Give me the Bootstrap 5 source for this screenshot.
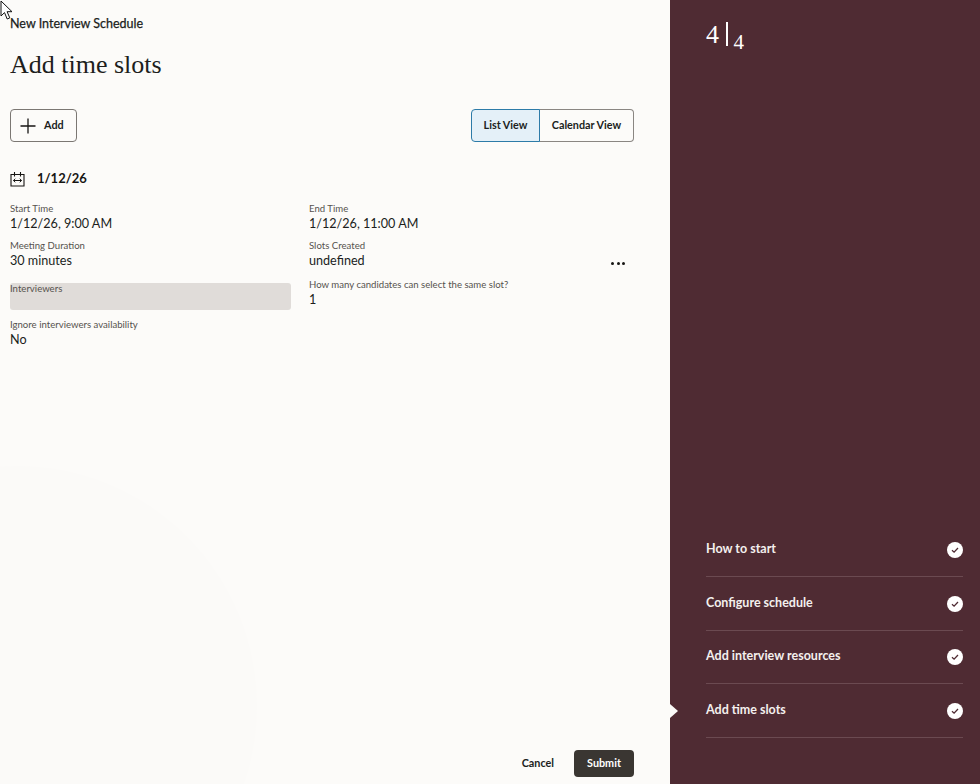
<!DOCTYPE html>
<html lang="en">
<head>
<meta charset="utf-8">
<title>Add time slots</title>
<link href="https://cdn.jsdelivr.net/npm/bootstrap@5.3.0/dist/css/bootstrap.min.css" rel="stylesheet">
<style>
html,body{height:784px;overflow:hidden}
body{font-family:Lato,"Noto Sans",sans-serif;background:#fcfbf9;color:#161513}
.shell{height:784px}
.mainpane{width:670px;padding:0 36px 7px 10px;position:relative;overflow:hidden;background:#fcfbf9}
.mainpane>*{position:relative}
.mainpane>.blob{position:absolute;left:-223px;top:466px;width:480px;height:480px;border-radius:50%;background:#fbfaf8}
.pointer{position:absolute;left:0;top:0;z-index:5}
.crumb{font-size:12.500px;line-height:16px;margin-top:16px;color:#201e1c;-webkit-text-stroke:.25px #201e1c}
.pagetitle{font-family:"Liberation Serif","DejaVu Serif",serif;font-size:26px;font-weight:400;line-height:32px;margin:17px 0 0;color:#201e1c}
.toolbar{margin-top:28px;height:33px}
.addbtn{height:33px;width:67px;padding:0 0 0 9px;gap:8px;font-size:10.800px;font-weight:700;background:transparent;border:1px solid #7b7773;border-radius:4px;color:#201e1c}
.viewgroup .btn{height:33px;font-size:10.800px;font-weight:700;padding:0 12px;color:#201e1c;background:transparent;border:1px solid #8a8682;border-radius:4px}
.viewgroup .btn.active{background:#e4f0f8;border-color:#2d7ba8;color:#201e1c;width:69px;padding:0}
.viewgroup .btn+.btn{margin-left:-1px;border-left-color:#2d7ba8;width:95px;padding:0}
.dayline{margin-top:26px;gap:12px;height:22px;font-size:13px;font-weight:700}
.fields{margin-top:12px;gap:18px}
.fieldcol{width:281px}
.fieldcol.wide{width:325px}
.fld{margin-bottom:7px;height:30px}
.lbl{font-size:9.600px;line-height:14px;color:#56524e;white-space:nowrap}
.val{font-size:12.600px;line-height:16px;color:#201e1c}
.graybox{height:27px;margin:14px 0 8px;background:#e0dcd9;border-radius:3px}
.graybox .lbl{line-height:11px}
.third{margin-top:9px}
.dots{gap:2.500px;margin:5px 9px 0 0}
.dots i{width:3px;height:3px;border-radius:50%;background:#161513;display:block}
.actions{gap:20px}
.cancelbtn{font-size:10.800px;font-weight:700;color:#201e1c;padding:0;border:0;background:transparent}
.submitbtn{font-size:10.800px;font-weight:700;height:27px;width:60px;padding:0;background:#3a3632;color:#fff;border:0;border-radius:4px}
.sidepane{width:310px;background:#4f2b33;color:#fff;padding:0 17px 46px 36px;position:relative}
.counter{font-family:"Liberation Serif",serif;padding-top:21px;height:60px;align-items:flex-start}
.counter .big{font-size:26px;line-height:28px;color:#fff}
.counter .bar{width:1.500px;height:24px;background:#fff;margin:1px 7px 0 7px;display:block}
.counter .small-n{font-size:21px;line-height:22px;margin-top:10px;margin-left:-1px}
.steps li{height:53.600px;border-bottom:1px solid #6b4a51;font-size:12.500px;font-weight:700;color:#f4f0ee}
.steps li span.stepname{margin-top:-1px}
.steps li:last-child{position:relative}
.caret{position:absolute;left:-36px;top:20px;width:0;height:0;border-style:solid;border-width:7px 0 7px 8px;border-color:transparent transparent transparent #fcfbf9}
</style>
</head>
<body>
<div class="d-flex shell">
  <main class="mainpane d-flex flex-column">
    <div class="blob"></div>
    <svg class="pointer" width="14" height="21" viewBox="0 0 14 21"><path d="M1 1v15l3.500-3.400 2.700 6.400 2.600-1.100-2.700-6.200H12z" fill="#fff" stroke="#111" stroke-width="1"/></svg>
    <div class="crumb">New Interview Schedule</div>
    <h1 class="pagetitle">Add time slots</h1>
    <div class="toolbar d-flex justify-content-between">
      <button type="button" class="btn addbtn d-flex align-items-center">
        <svg width="16" height="16" viewBox="0 0 16 16"><path d="M8 .5v15M.5 8h15" stroke="#161513" stroke-width="1.300" fill="none"/></svg>
        <span>Add</span>
      </button>
      <div class="btn-group viewgroup" role="group">
        <button type="button" class="btn active">List View</button>
        <button type="button" class="btn">Calendar View</button>
      </div>
    </div>
    <div class="dayline d-flex align-items-center">
      <svg width="15" height="15" viewBox="0 0 15 15" fill="none" stroke="#161513" stroke-width="1.100"><path d="M1 2.500h13v11.500H1zM4.500 0v4.500M10.500 0v4.500M3.500 8.500h8"/><path d="M5.200 6.700L3.500 8.500l1.700 1.800M9.800 6.700l1.700 1.800-1.700 1.800" stroke-width="1"/></svg>
      <span>1/12/26</span>
    </div>
    <div class="fields d-flex">
      <div class="fieldcol">
        <div class="fld"><div class="lbl">Start Time</div><div class="val">1/12/26, 9:00 AM</div></div>
        <div class="fld"><div class="lbl">Meeting Duration</div><div class="val">30 minutes</div></div>
        <div class="graybox"><div class="lbl">Interviewers</div></div>
        <div class="fld"><div class="lbl">Ignore interviewers availability</div><div class="val">No</div></div>
      </div>
      <div class="fieldcol wide">
        <div class="fld"><div class="lbl">End Time</div><div class="val">1/12/26, 11:00 AM</div></div>
        <div class="fld"><div class="lbl">Slots Created</div>
          <div class="d-flex justify-content-between align-items-center"><div class="val">undefined</div><div class="dots d-flex"><i></i><i></i><i></i></div></div>
        </div>
        <div class="fld third"><div class="lbl">How many candidates can select the same slot?</div><div class="val">1</div></div>
      </div>
    </div>
    <div class="actions d-flex justify-content-end align-items-center mt-auto">
      <button type="button" class="btn cancelbtn">Cancel</button>
      <button type="button" class="btn submitbtn">Submit</button>
    </div>
  </main>
  <aside class="sidepane d-flex flex-column">
    <div class="counter d-flex"><span class="big">4</span><span class="bar"></span><span class="small-n">4</span></div>
    <ul class="steps list-unstyled m-0 mt-auto">
      <li class="d-flex justify-content-between align-items-center"><span class="stepname">How to start</span><svg width="16" height="16" viewBox="0 0 16 16"><circle cx="8" cy="8" r="8" fill="#fff"/><path d="M5 8.200l2.100 2L11 6" stroke="#4f2b33" stroke-width="1.300" fill="none"/></svg></li>
      <li class="d-flex justify-content-between align-items-center"><span class="stepname">Configure schedule</span><svg width="16" height="16" viewBox="0 0 16 16"><circle cx="8" cy="8" r="8" fill="#fff"/><path d="M5 8.200l2.100 2L11 6" stroke="#4f2b33" stroke-width="1.300" fill="none"/></svg></li>
      <li class="d-flex justify-content-between align-items-center"><span class="stepname">Add interview resources</span><svg width="16" height="16" viewBox="0 0 16 16"><circle cx="8" cy="8" r="8" fill="#fff"/><path d="M5 8.200l2.100 2L11 6" stroke="#4f2b33" stroke-width="1.300" fill="none"/></svg></li>
      <li class="d-flex justify-content-between align-items-center"><span class="caret"></span><span class="stepname">Add time slots</span><svg width="16" height="16" viewBox="0 0 16 16"><circle cx="8" cy="8" r="8" fill="#fff"/><path d="M5 8.200l2.100 2L11 6" stroke="#4f2b33" stroke-width="1.300" fill="none"/></svg></li>
    </ul>
  </aside>
</div>
<script src="https://cdn.jsdelivr.net/npm/bootstrap@5.3.0/dist/js/bootstrap.bundle.min.js"></script>
</body>
</html>
